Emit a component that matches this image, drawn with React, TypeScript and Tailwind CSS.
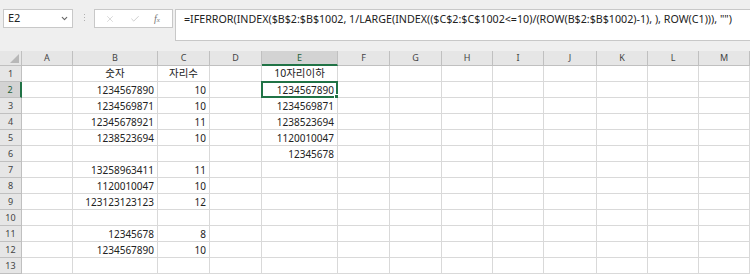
import { X, Check, ChevronDown } from "lucide-react";

const COLS = ["A", "B", "C", "D", "E", "F", "G", "H", "I", "J", "K", "L", "M"];

const B_VALUES = ["숫자", "1234567890", "1234569871", "12345678921", "1238523694", "", "13258963411", "1120010047", "123123123123", "", "12345678", "1234567890", ""];
const C_VALUES = ["자리수", "10", "10", "11", "10", "", "11", "10", "12", "", "8", "10", ""];
const E_VALUES = ["10자리이하", "1234567890", "1234569871", "1238523694", "1120010047", "12345678", "", "", "", "", "", "", ""];

const FORMULA = '=IFERROR(INDEX($B$2:$B$1002, 1/LARGE(INDEX(($C$2:$C$1002<=10)/(ROW(B$2:$B$1002)-1), ), ROW(C1))), "")';

const FONT = { fontFamily: "'Noto Sans', 'Noto Sans CJK KR', sans-serif" };

function FormulaBar() {
  return (
    <div className="flex h-[51px] items-start bg-[#efefef] pt-[9px]">
      {/* name box */}
      <div className="ml-[3px] flex h-[19px] w-[70px] items-center justify-between border border-[#c8c8c8] bg-white pl-[4px] pr-[3px] text-[11px] text-[#222]">
        <span>E2</span>
        <ChevronDown className="h-[9px] w-[9px] text-[#666]" strokeWidth={3} />
      </div>
      <div className="ml-[11px] mt-[5px] flex flex-col gap-[2px]">
        <span className="h-[1px] w-[1px] bg-[#b0b0b0]" />
        <span className="h-[1px] w-[1px] bg-[#b0b0b0]" />
        <span className="h-[1px] w-[1px] bg-[#b0b0b0]" />
      </div>
      {/* cancel / enter / fx */}
      <div className="ml-[9px] flex h-[19px] w-[79px] items-center border border-[#c8c8c8] bg-white pl-[10px] text-[#c4c4c4]">
        <X className="h-[10px] w-[10px]" strokeWidth={1.5} />
        <Check className="ml-[15px] h-[10px] w-[10px]" strokeWidth={2} />
        <span className="ml-[14px] text-[10px] italic text-[#777]" style={{ fontFamily: "'Liberation Serif', serif" }}>
          f<span className="text-[7px]">x</span>
        </span>
      </div>
      {/* formula input */}
      <div className="ml-[2px] h-[32px] flex-1 whitespace-nowrap border border-r-0 border-[#c8c8c8] bg-white pl-[8px] pt-[2px] text-[10.7px] leading-[14px] text-[#222]">
        {FORMULA}
      </div>
    </div>
  );
}

function Cell({ value, align, selected }: { value: string; align: "right" | "center"; selected?: boolean }) {
  const isKorean = /[가-힣]/.test(value);
  return (
    <div
      className={`relative flex h-[16px] items-center whitespace-nowrap border-b border-r border-[#d9d9d9] bg-white px-[3px] leading-none text-[#222] ${
        align === "right" ? "justify-end" : "justify-center"
      } ${isKorean ? "text-[10.5px]" : "text-[10px]"}`}
    >
      {value}
      {selected && (
        <div className="pointer-events-none absolute -left-[1px] -top-[1px] h-[17px] w-[77px] border-2 border-[#217346]">
          <span className="absolute -bottom-[3px] -right-[3px] h-[5px] w-[5px] border border-white bg-[#217346]" />
        </div>
      )}
    </div>
  );
}

function Sheet() {
  return (
    <div className="grid grid-cols-[22px_51px_85px_52px_52px_76px_52px_52px_51px_51px_53px_51px_51px_51px]">
      {/* corner */}
      <div className="relative h-[15px] border-b border-r border-[#c0c0c0] bg-[#e6e6e6]">
        <svg className="absolute bottom-[2px] right-[2px]" width="9" height="9" viewBox="0 0 9 9">
          <polygon points="9,0 9,9 0,9" fill="#b8b8b8" />
        </svg>
      </div>
      {COLS.map((c) => (
        <div
          key={c}
          className={`flex h-[15px] items-center justify-center text-[9px] ${
            c === "E"
              ? "border-b-2 border-r border-b-[#217346] border-r-[#c0c0c0] bg-[#d3d3d3] text-[#1f5f38]"
              : "border-b border-r border-[#c0c0c0] bg-[#e6e6e6] text-[#444]"
          }`}
        >
          {c}
        </div>
      ))}
      {B_VALUES.map((_, i) => {
        const row = i + 1;
        return (
          <div key={row} className="contents">
            <div
              className={`flex h-[16px] items-center justify-center text-[9px] ${
                row === 2
                  ? "border-b border-r-2 border-b-[#c0c0c0] border-r-[#217346] bg-[#d3d3d3] text-[#1f5f38]"
                  : "border-b border-r border-[#c0c0c0] bg-[#e6e6e6] text-[#444]"
              }`}
            >
              {row}
            </div>
            {COLS.map((c) => {
              let value = "";
              if (c === "B") value = B_VALUES[i];
              if (c === "C") value = C_VALUES[i];
              if (c === "E") value = E_VALUES[i];
              const align = row === 1 ? "center" : "right";
              return <Cell key={c} value={value} align={align} selected={c === "E" && row === 2} />;
            })}
          </div>
        );
      })}
    </div>
  );
}

export default function App() {
  return (
    <div className="h-[274px] w-[750px] overflow-hidden bg-white" style={FONT}>
      <FormulaBar />
      <Sheet />
    </div>
  );
}
